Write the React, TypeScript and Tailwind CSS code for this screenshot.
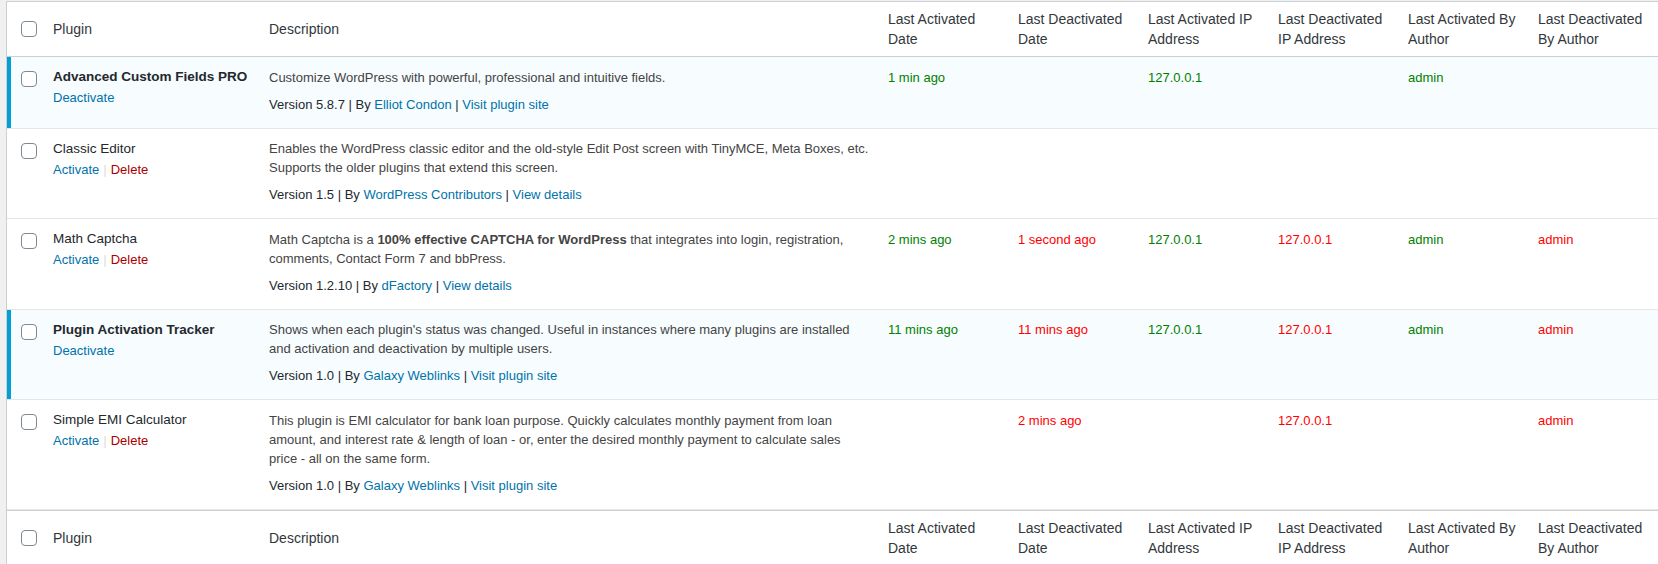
import React from "react";

type Row = {
  name: string;
  active: boolean;
  desc: React.ReactNode[];
  version: string;
  author: string;
  link: string;
  la?: string;
  ld?: string;
  lai?: string;
  ldi?: string;
  lab?: string;
  ldb?: string;
};

const rows: Row[] = [
  {
    name: "Advanced Custom Fields PRO",
    active: true,
    desc: ["Customize WordPress with powerful, professional and intuitive fields."],
    version: "5.8.7",
    author: "Elliot Condon",
    link: "Visit plugin site",
    la: "1 min ago",
    lai: "127.0.0.1",
    lab: "admin",
  },
  {
    name: "Classic Editor",
    active: false,
    desc: [
      "Enables the WordPress classic editor and the old-style Edit Post screen with TinyMCE, Meta Boxes, etc.",
      "Supports the older plugins that extend this screen.",
    ],
    version: "1.5",
    author: "WordPress Contributors",
    link: "View details",
  },
  {
    name: "Math Captcha",
    active: false,
    desc: [
      <>
        Math Captcha is a <strong className="font-bold">100% effective CAPTCHA for WordPress</strong> that integrates into login, registration,
      </>,
      "comments, Contact Form 7 and bbPress.",
    ],
    version: "1.2.10",
    author: "dFactory",
    link: "View details",
    la: "2 mins ago",
    ld: "1 second ago",
    lai: "127.0.0.1",
    ldi: "127.0.0.1",
    lab: "admin",
    ldb: "admin",
  },
  {
    name: "Plugin Activation Tracker",
    active: true,
    desc: [
      "Shows when each plugin's status was changed. Useful in instances where many plugins are installed",
      "and activation and deactivation by multiple users.",
    ],
    version: "1.0",
    author: "Galaxy Weblinks",
    link: "Visit plugin site",
    la: "11 mins ago",
    ld: "11 mins ago",
    lai: "127.0.0.1",
    ldi: "127.0.0.1",
    lab: "admin",
    ldb: "admin",
  },
  {
    name: "Simple EMI Calculator",
    active: false,
    desc: [
      "This plugin is EMI calculator for bank loan purpose. Quickly calculates monthly payment from loan",
      "amount, and interest rate & length of loan - or, enter the desired monthly payment to calculate sales",
      "price - all on the same form.",
    ],
    version: "1.0",
    author: "Galaxy Weblinks",
    link: "Visit plugin site",
    ld: "2 mins ago",
    ldi: "127.0.0.1",
    ldb: "admin",
  },
];

const GRID = "grid grid-cols-[36px_216px_619px_130px_130px_130px_130px_130px_130px]";

function Checkbox() {
  return (
    <span className="block w-4 h-4 rounded-[4px] border border-[#7e8993] bg-white" />
  );
}

function HeaderRow({ footer }: { footer?: boolean }) {
  const cols = [
    ["Plugin"],
    ["Description"],
    ["Last Activated", "Date"],
    ["Last Deactivated", "Date"],
    ["Last Activated IP", "Address"],
    ["Last Deactivated", "IP Address"],
    ["Last Activated By", "Author"],
    ["Last Deactivated", "By Author"],
  ];
  return (
    <div
      className={`${GRID} h-[55px] text-[14px] leading-[20px] text-[#32373c] ${
        footer ? "border-t border-[#ccd0d4]" : "border-b border-[#ccd0d4]"
      }`}
    >
      <div className="flex items-center pl-[14px]">
        <Checkbox />
      </div>
      {cols.map((c, i) => (
        <div key={i} className="flex flex-col justify-center px-[10px] whitespace-nowrap">
          {c.map((l, j) => (
            <span key={j}>{l}</span>
          ))}
        </div>
      ))}
    </div>
  );
}

function Val({ v, color }: { v?: string; color: string }) {
  return (
    <div className={`px-[10px] pt-[10.5px] leading-[19px] whitespace-nowrap ${color}`}>{v ?? ""}</div>
  );
}

function PluginRow({ r }: { r: Row }) {
  return (
    <div
      className={`${GRID} text-[13px] border-b border-[#e6e6e6] ${r.active ? "bg-[#f7fcfe]" : "bg-white"}`}
    >
      <div
        className={`pt-[14px] ${
          r.active ? "border-l-4 border-[#00a0d2] pl-[10px]" : "pl-[14px]"
        }`}
      >
        <Checkbox />
      </div>
      <div className="px-[10px] pt-[10px]">
        <div
          className={`text-[13.5px] leading-[20px] text-[#23282d] whitespace-nowrap ${
            r.active ? "font-bold" : "font-normal"
          }`}
        >
          {r.name}
        </div>
        <div className="mt-px leading-[19.5px] whitespace-nowrap">
          {r.active ? (
            <span className="text-[#0073aa]">Deactivate</span>
          ) : (
            <>
              <span className="text-[#0073aa]">Activate</span>
              <span className="text-[#dddddd] px-[4px]">|</span>
              <span className="text-[#aa0000]">Delete</span>
            </>
          )}
        </div>
      </div>
      <div className="px-[10px] pt-[10.5px] pb-[13.5px]">
        <div className="leading-[19px] text-[#444444] mb-[8px]">
          {r.desc.map((d, i) => (
            <div key={i} className="whitespace-nowrap">
              {d}
            </div>
          ))}
        </div>
        <div className="leading-[19.5px] text-[#23282d] whitespace-nowrap">
          Version {r.version} | By <span className="text-[#0073aa]">{r.author}</span> |{" "}
          <span className="text-[#0073aa]">{r.link}</span>
        </div>
      </div>
      <Val v={r.la} color="text-[#008000]" />
      <Val v={r.ld} color="text-[#ff0000]" />
      <Val v={r.lai} color="text-[#008000]" />
      <Val v={r.ldi} color="text-[#ff0000]" />
      <Val v={r.lab} color="text-[#008000]" />
      <Val v={r.ldb} color="text-[#ff0000]" />
    </div>
  );
}

export default function App() {
  return (
    <div
      className="w-[1658px] h-[564px] overflow-hidden bg-[#f0f0f1] pl-[6px] pt-px"
      style={{ fontFamily: '"Liberation Sans", Arial, sans-serif' }}
    >
      <div className="w-[1653px] border border-[#ccd0d4] bg-white">
        <HeaderRow />
        {rows.map((r) => (
          <PluginRow key={r.name} r={r} />
        ))}
        <HeaderRow footer />
      </div>
    </div>
  );
}
